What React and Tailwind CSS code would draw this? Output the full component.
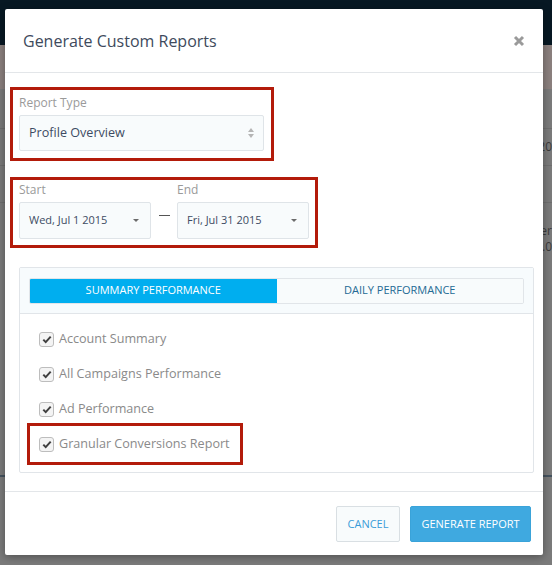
import React from 'react'

const font = { fontFamily: '"Open Sans", "Noto Sans", sans-serif' }

const reports = [
  { name: 'Account Summary' },
  { name: 'All Campaigns Performance' },
  { name: 'Ad Performance' },
  { name: 'Granular Conversions Report', flagged: true }
]

const Caret = () => (
  <svg width="8" height="5" viewBox="0 0 8 5" className="shrink-0">
    <path d="M1 1h6L4 4z" fill="#6b6b6b" />
  </svg>
)

const UpDown = () => (
  <svg width="8" height="12" viewBox="0 0 8 12" className="shrink-0">
    <path d="M4 1L7 5H1z" fill="#b5b5b5" />
    <path d="M4 11L7 7H1z" fill="#b5b5b5" />
  </svg>
)

const Check = () => (
  <span className="w-[15px] h-[15px] rounded-[3px] border border-[#bdbdbd] bg-[#f4f4f4] flex items-center justify-center shrink-0">
    <svg width="10" height="9" viewBox="0 0 10 9">
      <path d="M1.3 4.6l2.4 2.5L8.7 1.6" stroke="#404040" strokeWidth="2" fill="none" />
    </svg>
  </span>
)

const DateSelect = ({ value }) => (
  <div className="w-[132px] h-[37px] border border-[#dfe4e8] rounded-[2px] bg-[#f8fbfc] flex items-center justify-between pl-[9px] pr-[10px]">
    <span className="text-[11px] text-[#3d4b63]">{value}</span>
    <Caret />
  </div>
)

const App = () => {
  return (
    <div className="relative w-[552px] h-[565px] overflow-hidden bg-[#7b7b7b]" style={font}>
      {/* dimmed page behind the dialog */}
      <div className="flex flex-col">
        <div className="h-[45px] bg-[#071823]" />
        <div className="h-[44px] bg-[#8b807e]" />
        <div className="h-[40px] border-b border-[#6f6f6f]" />
        <div className="h-[37px] border-b border-[#6f6f6f] flex justify-end items-center">
          <span className="text-[12px] text-[#3b3b3b]">20</span>
        </div>
        <div className="h-[37px] border-b border-[#6f6f6f]" />
        <div className="h-[54px] flex flex-col justify-end items-end pb-[2px]">
          <span className="text-[12px] leading-[16px] text-[#3b3b3b]">er</span>
          <span className="text-[12px] leading-[16px] text-[#3b3b3b]">.0</span>
        </div>
        <div className="h-[220px] border-b-2 border-[#45535f]" />
        <div className="flex h-[60px]">
          <div className="w-[69px] border-r border-[#6f6f6f]" />
          <div className="w-[85px] border-r border-[#6f6f6f]" />
          <div className="w-[86px] border-r border-[#6f6f6f]" />
          <div className="w-[84px] border-r border-[#6f6f6f]" />
          <div className="w-[85px] border-r border-[#6f6f6f]" />
          <div className="w-[85px] border-r border-[#6f6f6f]" />
        </div>
      </div>

      {/* dialog */}
      <div className="absolute left-[5px] top-[9px] w-[538px] h-[546px] bg-white rounded-[2px] shadow-[0_2px_8px_rgba(0,0,0,0.35)] flex flex-col">
        <div className="h-[64px] shrink-0 border-b border-[#e3e6e9] flex items-center justify-between pl-[18px] pr-[18px]">
          <h1 className="text-[16px] text-[#3e4a5c]">Generate Custom Reports</h1>
          <svg width="12" height="12" viewBox="0 0 12 12">
            <path d="M2 2l8 8M10 2l-8 8" stroke="#9a9a9a" strokeWidth="3" />
          </svg>
        </div>

        <div className="flex-1 pl-[5px] pt-[14px]">
          <div className="w-[264px] border-[3px] border-[#b31b0a] pl-[6px] pt-[5px] pb-[7px]">
            <div className="text-[12px] text-[#9a9a9a] leading-[16px]">Report Type</div>
            <div className="mt-[4px] w-[245px] h-[36px] border border-[#dfe4e8] rounded-[2px] bg-[#f8fbfc] flex items-center justify-between pl-[9px] pr-[8px]">
              <span className="text-[12.6px] text-[#3d4b63]">Profile Overview</span>
              <UpDown />
            </div>
          </div>

          <div className="mt-[16px] w-[308px] border-[3px] border-[#b31b0a] pl-[6px] pt-[2px] pb-[6px]">
            <div className="flex items-end">
              <div className="flex flex-col">
                <span className="text-[12px] text-[#9a9a9a] leading-[16px]">Start</span>
                <div className="mt-[4px]"><DateSelect value="Wed, Jul 1 2015" /></div>
              </div>
              <div className="w-[26px] h-[37px] flex items-center justify-center pb-[10px]">
                <span className="w-[11px] h-[1px] bg-[#555]" />
              </div>
              <div className="flex flex-col">
                <span className="text-[12px] text-[#9a9a9a] leading-[16px]">End</span>
                <div className="mt-[4px]"><DateSelect value="Fri, Jul 31 2015" /></div>
              </div>
            </div>
          </div>

          <div className="mt-[19px] ml-[9px] w-[515px] h-[206px] border border-[#e1e5e9] rounded-[2px] flex flex-col">
            <div className="h-[46px] shrink-0 bg-[#f7fbfd] border-b border-[#e1e5e9] flex items-center px-[9px]">
              <div className="flex w-full h-[26px] border border-[#e1e5e9] rounded-[2px] overflow-hidden">
                <div className="w-1/2 bg-[#00aeef] flex items-center justify-center text-[11px] text-white">
                  SUMMARY PERFORMANCE
                </div>
                <div className="w-1/2 bg-[#f8fbfc] flex items-center justify-center text-[11px] text-[#246a94]">
                  DAILY PERFORMANCE
                </div>
              </div>
            </div>
            <div className="flex flex-col pt-[8px] pl-[7px]">
              {reports.map((r) =>
                r.flagged ? (
                  <div key={r.name} className="w-[216px] h-[42px] -mt-[4px] border-[3px] border-[#b31b0a] flex items-center gap-[5px] pl-[9px]">
                    <Check />
                    <span className="text-[12.6px] text-[#8a8a8a]">{r.name}</span>
                  </div>
                ) : (
                  <div key={r.name} className="h-[35px] flex items-center gap-[5px] pl-[12px]">
                    <Check />
                    <span className="text-[12.6px] text-[#8a8a8a]">{r.name}</span>
                  </div>
                )
              )}
            </div>
          </div>
        </div>

        <div className="h-[64px] shrink-0 border-t border-[#e3e6e9] flex items-start justify-end gap-[10px] pt-[14px] pr-[12px]">
          <button className="w-[64px] h-[36px] border border-[#d9dfe3] rounded-[2px] bg-[#f8fbfc] text-[11px] text-[#3a9bd8]">
            CANCEL
          </button>
          <button className="w-[121px] h-[36px] border border-[#3aa3d9] rounded-[2px] bg-[#3fa9e0] text-[11px] text-white">
            GENERATE REPORT
          </button>
        </div>
      </div>
    </div>
  )
}

export default App
